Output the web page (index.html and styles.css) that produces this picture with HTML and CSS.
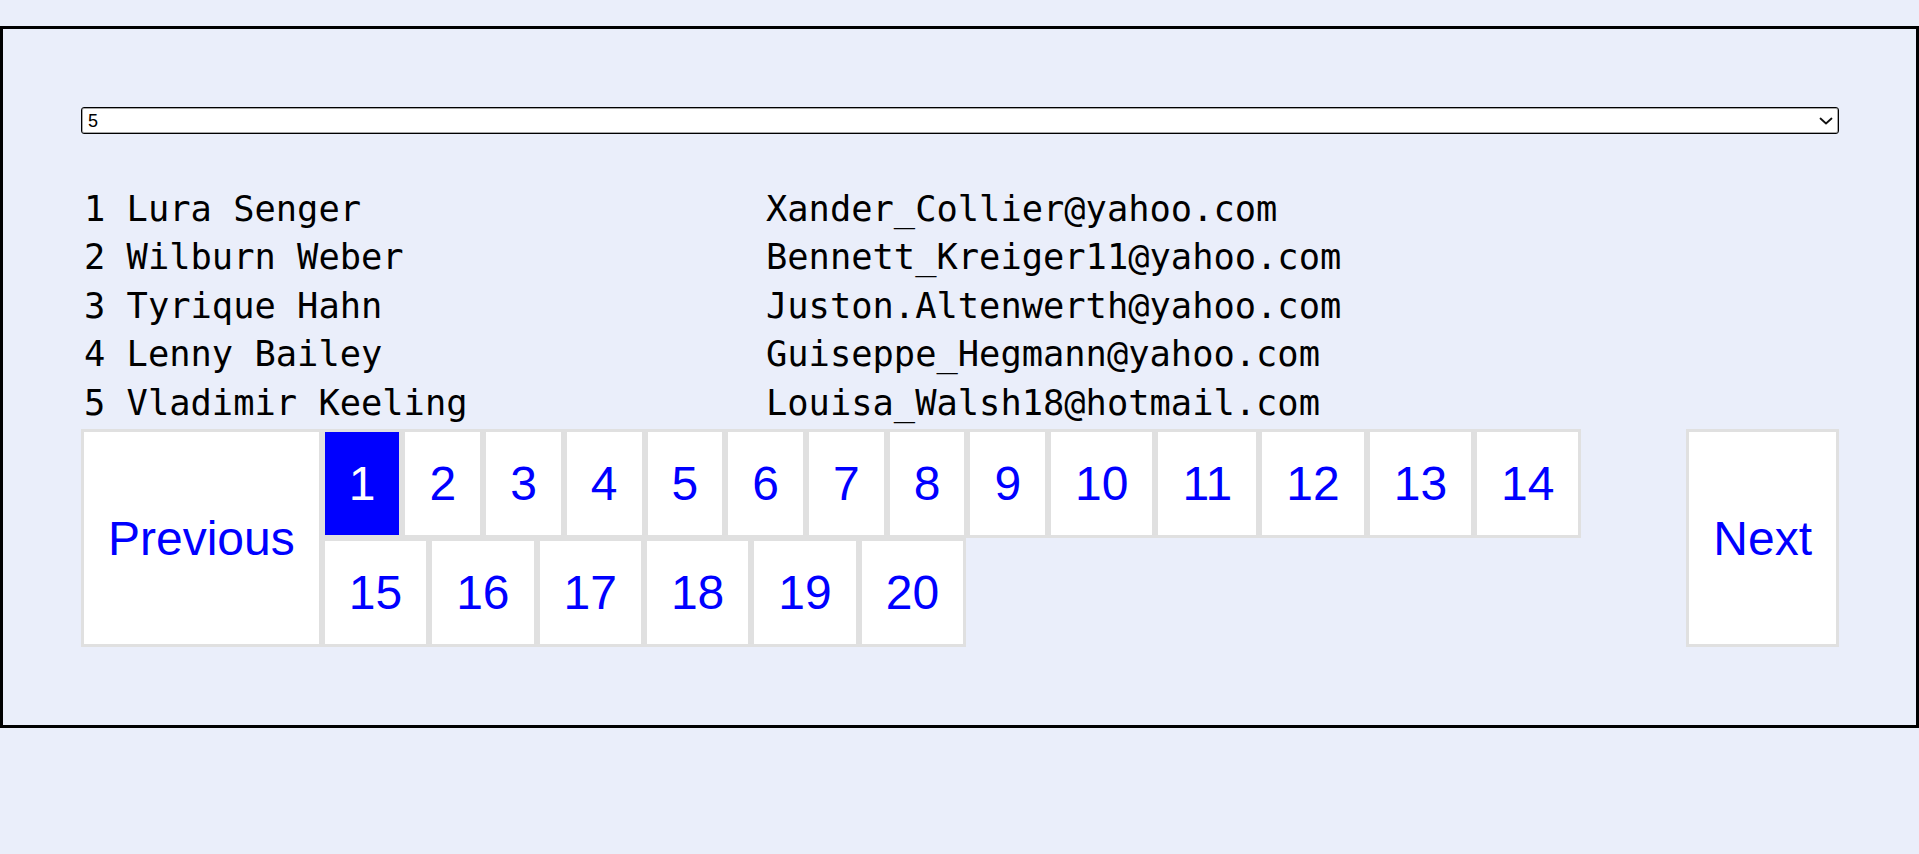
FILE: index.html
```html
<!DOCTYPE html>
<html lang="en">
<head>
<meta charset="utf-8">
<title>Users</title>
<link rel="stylesheet" href="styles.css">
</head>
<body>
<div class="app">
  <div class="select-wrap">
    <select class="page-size">
      <option>5</option>
      <option>10</option>
      <option>20</option>
    </select>
    <svg class="chev" width="14" height="8" viewBox="0 0 14 8"><path d="M1.5 1.5 L7 6.5 L12.5 1.5" fill="none" stroke="#111" stroke-width="1.8" stroke-linecap="round" stroke-linejoin="round"/></svg>
  </div>
  <ul class="users">
    <li class="user"><span class="name">1 Lura Senger</span><span class="email">Xander_Collier@yahoo.com</span></li>
    <li class="user"><span class="name">2 Wilburn Weber</span><span class="email">Bennett_Kreiger11@yahoo.com</span></li>
    <li class="user"><span class="name">3 Tyrique Hahn</span><span class="email">Juston.Altenwerth@yahoo.com</span></li>
    <li class="user"><span class="name">4 Lenny Bailey</span><span class="email">Guiseppe_Hegmann@yahoo.com</span></li>
    <li class="user"><span class="name">5 Vladimir Keeling</span><span class="email">Louisa_Walsh18@hotmail.com</span></li>
  </ul>
  <nav class="pager">
    <button class="pg-btn pg-edge">Previous</button>
    <div class="pg-pages">
      <button class="pg-btn active">1</button>
      <button class="pg-btn">2</button>
      <button class="pg-btn">3</button>
      <button class="pg-btn">4</button>
      <button class="pg-btn">5</button>
      <button class="pg-btn">6</button>
      <button class="pg-btn">7</button>
      <button class="pg-btn">8</button>
      <button class="pg-btn">9</button>
      <button class="pg-btn">10</button>
      <button class="pg-btn">11</button>
      <button class="pg-btn">12</button>
      <button class="pg-btn">13</button>
      <button class="pg-btn">14</button>
      <button class="pg-btn">15</button>
      <button class="pg-btn">16</button>
      <button class="pg-btn">17</button>
      <button class="pg-btn">18</button>
      <button class="pg-btn">19</button>
      <button class="pg-btn">20</button>
    </div>
    <button class="pg-btn pg-edge">Next</button>
  </nav>
</div>
</body>
</html>
```
FILE: styles.css
```css
html, body {
  margin: 0;
  padding: 0;
  background: #eaeefa;
}

body {
  padding-top: 26px;
  font-family: "Liberation Sans", Arial, sans-serif;
}

.app {
  border: 3px solid #000;
  padding: 78px 77px 78px 78px;
}

.select-wrap {
  position: relative;
}

.page-size {
  display: block;
  width: 100%;
  height: 27px;
  margin: 0;
  padding: 0 6px;
  -webkit-appearance: none;
  appearance: none;
  background: #fff;
  border: 1px solid #000;
  border-radius: 3px;
  box-shadow: inset 0 0 0 1px rgba(0, 0, 0, 0.35);
  font-family: "Liberation Sans", Arial, sans-serif;
  font-size: 18px;
  color: #000;
  box-sizing: border-box;
}

.chev {
  position: absolute;
  right: 6px;
  top: 10px;
  pointer-events: none;
}

.users {
  list-style: none;
  margin: 51px 0 2px 0;
  padding: 0;
  font-family: "DejaVu Sans Mono", "Liberation Mono", monospace;
  font-size: 35.4px;
  line-height: 48.4px;
  color: #000;
}

.user {
  display: flex;
  padding-left: 3px;
}

.name {
  width: 682px;
  flex: none;
  white-space: pre;
}

.email {
  white-space: pre;
}

.pager {
  display: flex;
  align-items: stretch;
}

.pg-pages {
  flex: 1;
  display: flex;
  flex-wrap: wrap;
  align-content: flex-start;
  align-items: flex-start;
}

.pg-btn {
  margin: 0;
  padding: 24px;
  border: 3px solid #e0e0e0;
  border-radius: 0;
  background: #fff;
  color: #0000ff;
  font-family: "Liberation Sans", Arial, sans-serif;
  font-size: 48px;
  line-height: normal;
  cursor: pointer;
}

.pg-btn.active {
  background: #0000ff;
  color: #fff;
}

.pg-edge {
  flex: none;
  display: flex;
  align-items: center;
  justify-content: center;
}
```
